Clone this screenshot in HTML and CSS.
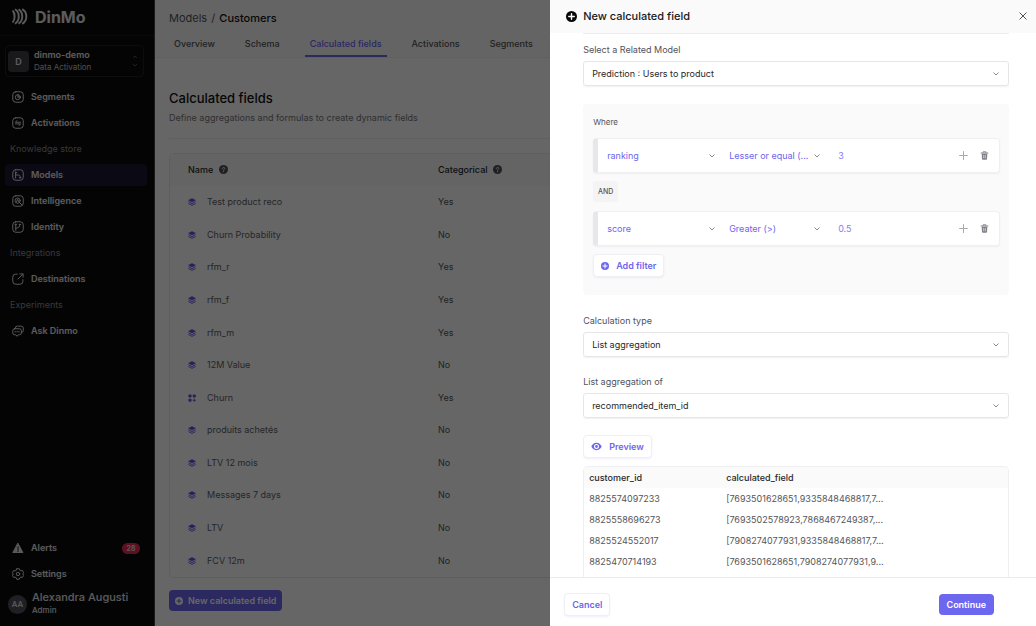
FILE: index.html
```html
<!DOCTYPE html>
<html lang="en">
<head>
    <meta charset="UTF-8">
    <meta name="viewport" content="width=device-width, initial-scale=1.0">
    <title>DinMo - Calculated fields</title>
    <link rel="stylesheet" href="styles.css">
</head>
<body>
<!-- shared icons -->
<svg class="sprite" aria-hidden="true">
    <symbol id="i-layers" viewBox="0 0 16 16">
        <path d="M8 1 15 4.500 8 8 1 4.500z" fill="currentColor" stroke="currentColor" stroke-linejoin="round"/>
        <path d="M1.500 8 8 11.200 14.500 8M1.500 11.500 8 14.700l6.500-3.200" fill="none" stroke="currentColor" stroke-width="1.700" stroke-linecap="round" stroke-linejoin="round"/>
    </symbol>
    <symbol id="i-grid" viewBox="0 0 16 16">
        <rect x="1" y="1" width="6" height="6" rx="1.500" fill="currentColor"/>
        <rect x="9.500" y="1" width="6" height="6" rx="1.500" fill="currentColor"/>
        <rect x="1" y="9.500" width="6" height="6" rx="1.500" fill="currentColor"/>
        <path d="M12.500 9.500v6M9.500 12.500h6" stroke="currentColor" stroke-width="1.800"/>
    </symbol>
    <symbol id="i-help" viewBox="0 0 16 16">
        <circle cx="8" cy="8" r="8" fill="currentColor"/>
        <path d="M5.800 6.200C5.900 3.300 10.300 3.400 10.200 6.200 10.100 7.700 8 7.700 8 9.600" fill="none" stroke="#fafafa" stroke-width="1.600" stroke-linecap="round"/>
        <circle cx="8" cy="12" r="1.100" fill="#fafafa"/>
    </symbol>
    <symbol id="i-plus-circle" viewBox="0 0 16 16">
        <circle cx="8" cy="8" r="8" fill="currentColor"/>
        <path class="cut" d="M8 4v8M4 8h8" stroke-width="2" stroke-linecap="round"/>
    </symbol>
    <symbol id="i-plus" viewBox="0 0 16 16">
        <path d="M8 1v14M1 8h14" stroke="currentColor" stroke-width="1.800" stroke-linecap="round"/>
    </symbol>
    <symbol id="i-trash" viewBox="0 0 16 16">
        <path d="M2 3.500h12" stroke="currentColor" stroke-width="2" stroke-linecap="round"/>
        <path d="M5.500 3V1.300h5V3" fill="none" stroke="currentColor" stroke-width="1.500"/>
        <path d="M3 5h10l-.6 9.200c-.1.800-.6 1.300-1.400 1.300H5c-.8 0-1.300-.5-1.400-1.300z" fill="currentColor"/>
        <path d="M6.500 7v6M9.500 7v6" stroke="#fff" stroke-width="1"/>
    </symbol>
</svg>

<div class="app">
    <aside class="sidebar">
        <div class="brand">
            <svg class="brand-mark" viewBox="0 0 16 17" fill="none" stroke="currentColor" stroke-width="1.900">
                <path d="M.5 2.500C3.300 5 3.300 12 .5 14.500"/>
                <path d="M3 1.300c5 3 5 11.400 0 14.400"/>
                <path d="M6.500 1.200c5 3.200 5 11.400 0 14.600"/>
                <path d="M10.200 1.200c5.500 3 5.500 11.600 0 14.600"/>
            </svg>
            <span>DinMo</span>
        </div>

        <button class="workspace" type="button">
            <span class="workspace-logo">D</span>
            <span class="workspace-text">
                <strong>dinmo-demo</strong>
                <small>Data Activation</small>
            </span>
            <svg class="workspace-arrows" viewBox="0 0 6 14" fill="none" stroke="currentColor"><path d="M1 4l2-2 2 2M1 10l2 2 2-2"/></svg>
        </button>

        <nav class="nav">
            <a href="#" class="nav-item">
                <svg class="nav-icon" viewBox="0 0 16 16"><rect x="1" y="1" width="14" height="14" rx="4"/><circle cx="7.700" cy="8.300" r="3.300"/><path d="M8 8V4.700M8 8h3.500"/></svg>
                Segments
            </a>
            <a href="#" class="nav-item">
                <svg class="nav-icon" viewBox="0 0 16 16"><rect x="1" y="1" width="14" height="14" rx="4"/><path d="M11.500 7h-7l2-2.200M4.500 9.200h7l-2 2.200"/></svg>
                Activations
            </a>
            <span class="nav-label">Knowledge store</span>
            <a href="#" class="nav-item active">
                <svg class="nav-icon" viewBox="0 0 16 16"><rect x="1" y="1" width="14" height="14" rx="4"/><path d="M4.800 4v8M4.800 8h3.500c1.800 0 2.700 1 2.700 3v1"/><path d="M4.500 4.800h2M10 11.500h2"/></svg>
                Models
            </a>
            <a href="#" class="nav-item">
                <svg class="nav-icon" viewBox="0 0 16 16"><rect x="1" y="1" width="14" height="14" rx="4"/><circle cx="7.500" cy="7.500" r="3.500"/><path d="M10 10l3 3M6 9l1.500-3.500L9 9"/></svg>
                Intelligence
            </a>
            <a href="#" class="nav-item">
                <svg class="nav-icon" viewBox="0 0 16 16"><rect x="1" y="1" width="14" height="14" rx="4"/><path d="M5 4v8.500M5 9.500c4 0 5.500-1.500 5.500-4.500M4 4.500h2.200M9.500 4.500h2.200"/></svg>
                Identity
            </a>
            <span class="nav-label">Integrations</span>
            <a href="#" class="nav-item">
                <svg class="nav-icon" viewBox="0 0 16 16"><path d="M7 1.500H5a4 4 0 0 0-4 4V11a4 4 0 0 0 4 4h5.500a4 4 0 0 0 4-4V9M8 8l6.500-6.500M10.500 1.200h4.300v4.300"/></svg>
                Destinations
            </a>
            <span class="nav-label">Experiments</span>
            <a href="#" class="nav-item">
                <svg class="nav-icon" viewBox="0 0 16 16"><path d="M4.500 4.500V4a2.500 2.500 0 0 1 2.500-2.500h5.500A2.500 2.500 0 0 1 15 4v3.500a2.500 2.500 0 0 1-2.500 2.500"/><path d="M3.500 5H10a2.500 2.500 0 0 1 2.500 2.500v3A2.500 2.500 0 0 1 10 13H8.500L6.700 15 5 13H3.500A2.500 2.500 0 0 1 1 10.500v-3A2.500 2.500 0 0 1 3.500 5z"/><path d="M4 9h.8M6.400 9h.8M8.800 9h.8"/></svg>
                Ask Dinmo
            </a>
        </nav>

        <div class="nav nav-bottom">
            <a href="#" class="nav-item">
                <svg class="nav-icon" viewBox="0 0 16 16"><path d="M8 2 14.500 14h-13z" fill="currentColor"/><path d="M8 6.500v3.500M8 11.500v1.200" class="dark"/></svg>
                Alerts
                <span class="badge">28</span>
            </a>
            <a href="#" class="nav-item">
                <svg class="nav-icon" viewBox="0 0 16 16"><path d="M6.300 1h3.400l.7 2 1.400.8 2.100-.4 1.700 2.900L14.200 8l1.400 1.700-1.700 2.900-2.100-.4-1.400.8-.7 2H6.300l-.7-2-1.400-.8-2.100.4L.4 9.700 1.800 8 .4 6.300l1.700-2.900 2.100.4L5.600 3z"/><circle cx="8" cy="8" r="2.300"/></svg>
                Settings
            </a>
            <div class="user">
                <span class="avatar">AA</span>
                <span class="user-text">
                    <strong>Alexandra Augusti</strong>
                    <small>Admin</small>
                </span>
            </div>
        </div>
    </aside>

    <main class="main">
        <header class="page-header">
            <div class="breadcrumb"><a href="#">Models</a> <span>/</span> <b>Customers</b></div>
            <nav class="tabs">
                <a href="#">Overview</a>
                <a href="#">Schema</a>
                <a href="#" class="active">Calculated fields</a>
                <a href="#">Activations</a>
                <a href="#">Segments</a>
            </nav>
        </header>

        <section class="content">
            <h1>Calculated fields</h1>
            <p class="intro">Define aggregations and formulas to create dynamic fields</p>
            <div class="table-card">
                <table class="fields">
                    <thead>
                    <tr>
                        <th>Name <svg class="help"><use href="#i-help"/></svg></th>
                        <th>Categorical <svg class="help"><use href="#i-help"/></svg></th>
                    </tr>
                    </thead>
                    <tbody>
                    <tr><td><svg class="type"><use href="#i-layers"/></svg>Test product reco</td><td>Yes</td></tr>
                    <tr><td><svg class="type"><use href="#i-layers"/></svg>Churn Probability</td><td>No</td></tr>
                    <tr><td><svg class="type"><use href="#i-layers"/></svg>rfm_r</td><td>Yes</td></tr>
                    <tr><td><svg class="type"><use href="#i-layers"/></svg>rfm_f</td><td>Yes</td></tr>
                    <tr><td><svg class="type"><use href="#i-layers"/></svg>rfm_m</td><td>Yes</td></tr>
                    <tr><td><svg class="type"><use href="#i-layers"/></svg>12M Value</td><td>No</td></tr>
                    <tr><td><svg class="type"><use href="#i-grid"/></svg>Churn</td><td>Yes</td></tr>
                    <tr><td><svg class="type"><use href="#i-layers"/></svg>produits achetés</td><td>No</td></tr>
                    <tr><td><svg class="type"><use href="#i-layers"/></svg>LTV 12 mois</td><td>No</td></tr>
                    <tr><td><svg class="type"><use href="#i-layers"/></svg>Messages 7 days</td><td>No</td></tr>
                    <tr><td><svg class="type"><use href="#i-layers"/></svg>LTV</td><td>No</td></tr>
                    <tr><td><svg class="type"><use href="#i-layers"/></svg>FCV 12m</td><td>No</td></tr>
                    </tbody>
                </table>
            </div>
            <button class="btn btn-primary btn-new" type="button"><svg class="btn-icon"><use href="#i-plus-circle"/></svg>New calculated field</button>
        </section>
    </main>
</div>

<div class="overlay"></div>

<div class="drawer" role="dialog" aria-labelledby="drawerTitle">
    <header class="drawer-header">
        <svg class="drawer-icon"><use href="#i-plus-circle"/></svg>
        <h2 id="drawerTitle">New calculated field</h2>
        <button class="close" type="button" aria-label="Close">
            <svg viewBox="0 0 10 10" fill="none" stroke="currentColor"><path d="M1.500 1.500l7 7M8.500 1.500l-7 7"/></svg>
        </button>
    </header>

    <form class="drawer-body">
        <div class="form-group">
            <label for="relatedModel">Select a Related Model</label>
            <select id="relatedModel"><option>Prediction : Users to product</option></select>
        </div>

        <div class="filters">
            <p class="where">Where</p>
            <div class="filter">
                <select class="filter-field" aria-label="Field"><option>ranking</option></select>
                <select class="filter-operator" aria-label="Operator"><option>Lesser or equal (...</option></select>
                <input class="filter-value" type="text" aria-label="Value" value="3">
                <button class="icon-btn plus" type="button" aria-label="Add condition"><svg><use href="#i-plus"/></svg></button>
                <button class="icon-btn" type="button" aria-label="Delete filter"><svg><use href="#i-trash"/></svg></button>
            </div>
            <span class="and">AND</span>
            <div class="filter">
                <select class="filter-field" aria-label="Field"><option>score</option></select>
                <select class="filter-operator" aria-label="Operator"><option>Greater (&gt;)</option></select>
                <input class="filter-value" type="text" aria-label="Value" value="0.5">
                <button class="icon-btn plus" type="button" aria-label="Add condition"><svg><use href="#i-plus"/></svg></button>
                <button class="icon-btn" type="button" aria-label="Delete filter"><svg><use href="#i-trash"/></svg></button>
            </div>
            <button class="btn btn-light" type="button"><svg class="btn-icon"><use href="#i-plus-circle"/></svg>Add filter</button>
        </div>

        <div class="form-group">
            <label for="calcType">Calculation type</label>
            <select id="calcType"><option>List aggregation</option></select>
        </div>
        <div class="form-group">
            <label for="aggregationOf">List aggregation of</label>
            <select id="aggregationOf"><option>recommended_item_id</option></select>
        </div>

        <button class="btn btn-light" type="button">
            <svg class="btn-icon eye" viewBox="0 0 18 14"><path d="M9 1C4.500 1 1.800 4.300.5 7 1.800 9.700 4.500 13 9 13s7.200-3.300 8.500-6C16.200 4.300 13.500 1 9 1z" fill="currentColor"/><circle cx="9" cy="7" r="3.200" fill="currentColor" stroke="#fff" stroke-width="1.800"/></svg>Preview
        </button>

        <div class="preview-card">
            <table class="preview">
                <thead>
                <tr><th>customer_id</th><th>calculated_field</th></tr>
                </thead>
                <tbody>
                <tr><td>8825574097233</td><td>[7693501628651,9335848468817,7...</td></tr>
                <tr><td>8825558696273</td><td>[7693502578923,7868467249387,...</td></tr>
                <tr><td>8825524552017</td><td>[7908274077931,9335848468817,7...</td></tr>
                <tr><td>8825470714193</td><td>[7693501628651,7908274077931,9...</td></tr>
                </tbody>
            </table>
        </div>
    </form>

    <footer class="drawer-footer">
        <button class="btn btn-light" type="button">Cancel</button>
        <button class="btn btn-primary" type="button">Continue</button>
    </footer>
</div>
</body>
</html>
```
FILE: styles.css
```css
* { box-sizing: border-box; }
body {
    margin: 0;
    font-family: Inter, sans-serif;
    font-size: 9px;
    line-height: 14px;
    color: #555559;
}
a { color: inherit; text-decoration: none; }
button, input, select { font: inherit; color: inherit; }
button { cursor: pointer; }
.sprite { position: absolute; width: 0; height: 0; }

.app { display: flex; height: 100vh; overflow: hidden; }

/* sidebar */
.sidebar {
    flex: 0 0 155px;
    display: flex;
    flex-direction: column;
    background: #0c0c0c;
    border-right: 1px solid #444;
    color: #e4e4e7;
}
.brand {
    display: flex;
    align-items: center;
    gap: 7px;
    height: 36px;
    padding: 0 12px 2px;
    border-bottom: 1px solid #1c1c1e;
    font-size: 16px;
    line-height: 20px;
    font-weight: 700;
}
.brand-mark { width: 16px; height: 17px; }
.workspace {
    display: flex;
    align-items: center;
    gap: 5px;
    height: 32px;
    margin: 9px 10px 9px 5px;
    padding: 0 5px 0 2px;
    border: 1px solid #222225;
    border-radius: 4px;
    background: none;
    text-align: left;
}
.workspace-logo {
    width: 21px;
    height: 21px;
    border-radius: 4px;
    background: #3f3f46;
    font-weight: 600;
    line-height: 21px;
    text-align: center;
}
.workspace-text, .user-text { display: flex; flex-direction: column; flex: 1; }
.workspace-text strong { font-weight: 600; line-height: 13px; }
.workspace-text small { font-size: 8px; line-height: 13px; color: #c4c4c8; }
.workspace-arrows { width: 6px; height: 14px; color: #52525b; }

.nav { display: flex; flex-direction: column; gap: 4px; padding: 0 7px 0 5px; }
.nav-item, .nav-label { height: 22px; line-height: 22px; }
.nav-item {
    display: flex;
    align-items: center;
    gap: 7px;
    padding: 0 7px;
    border-radius: 4px;
    font-weight: 600;
}
.nav-item.active { background: #1c1a34; }
.nav-label { padding-left: 5px; color: #8b8b91; }
.nav-icon {
    width: 12px;
    height: 12px;
    fill: none;
    stroke: currentColor;
    stroke-width: 1.300;
    stroke-linecap: round;
    stroke-linejoin: round;
}
.nav-icon .dark { stroke: #0c0c0c; }
.badge {
    margin-left: auto;
    width: 18px;
    border-radius: 6px;
    background: #e92a55;
    font-size: 7px;
    line-height: 11px;
    text-align: center;
}
.nav-bottom { margin-top: auto; padding-bottom: 9px; }
.user { display: flex; align-items: center; gap: 5px; margin-top: 2px; padding-left: 3px; }
.avatar {
    width: 19px;
    height: 19px;
    border-radius: 50%;
    background: #52525b;
    font-size: 8px;
    font-weight: 500;
    line-height: 19px;
    text-align: center;
}
.user-text strong { font-size: 11px; font-weight: 500; line-height: 13px; }
.user-text small { font-size: 8px; font-weight: 500; line-height: 13px; }

/* page */
.main { flex: 1; display: flex; flex-direction: column; min-width: 0; }
.page-header { padding: 10px 14px 0; border-bottom: 1px solid #f1f1f2; background: #fafafa; }
.breadcrumb { font-size: 11px; line-height: 16px; }
.breadcrumb span { padding: 0 1px; }
.breadcrumb b { font-weight: 500; color: #111; }
.tabs { display: flex; gap: 20px; margin-top: 7px; font-weight: 500; }
.tabs a { padding: 4px 5px; border-bottom: 2px solid transparent; }
.tabs .active { color: #6d66ee; border-bottom-color: #6d66ee; }

.content {
    flex: 1;
    display: flex;
    flex-direction: column;
    align-items: stretch;
    min-height: 0;
    padding: 31px 14px 15px;
}
h1 { margin: 0; font-size: 13px; font-weight: 500; line-height: 18px; color: #111; }
.intro { margin: 4px 0 0; padding-bottom: 13px; border-bottom: 1px solid #f1f1f2; color: #77777c; }
.table-card { flex: 1; min-height: 0; margin: 14px 0 12px; border: 1px solid #ececee; border-radius: 5px; overflow: hidden; }
.fields { width: 100%; height: 100%; border-collapse: collapse; }
.fields th, .fields td { padding: 0 0 0 18px; text-align: left; }
.fields th { height: 32px; background: #fafafa; font-weight: 500; color: #27272a; }
.fields th:first-child { width: 250px; }
.fields td:first-child { color: #606066; }
.help { width: 9px; height: 9px; margin-left: 3px; vertical-align: -1px; color: #52525b; }
.type { width: 8px; height: 8px; margin-right: 11px; vertical-align: -1px; color: #5b50e8; }

.btn {
    display: inline-flex;
    align-items: center;
    align-self: flex-start;
    gap: 7px;
    height: 23px;
    padding: 0 7px;
    border: 1px solid transparent;
    border-radius: 4px;
    font-weight: 600;
}
.btn-icon { width: 8px; height: 8px; --cut: #fff; }
.btn-icon.eye { width: 11px; height: 9px; }
.cut { stroke: var(--cut, #fff); }
.btn-primary { height: 21px; background: #6d66ee; color: #fff; }
.btn-new { gap: 5px; padding: 0 5px; }
.btn-new .btn-icon { --cut: #6d66ee; }
.btn-light { background: #fff; border-color: #f0f0f4; box-shadow: 0 1px 2px rgba(80, 70, 200, 0.08); color: #6d66ee; }

.overlay { position: fixed; inset: 0; background: rgba(0, 0, 0, 0.6); }

/* drawer */
.drawer {
    position: fixed;
    top: 0;
    right: 0;
    bottom: 0;
    width: 46.9%;
    display: flex;
    flex-direction: column;
    background: #fff;
}
.drawer-header {
    display: flex;
    align-items: center;
    gap: 6px;
    height: 33px;
    padding: 0 8px 1px 16px;
    background: #fafafa;
}
.drawer-icon { width: 11px; height: 11px; color: #09090b; }
h2 { flex: 1; margin: 0; font-size: 11px; font-weight: 500; color: #18181b; }
.close { display: flex; padding: 0; border: 0; background: none; }
.close svg { width: 10px; height: 10px; }
.drawer-body {
    flex: 1;
    display: flex;
    flex-direction: column;
    align-items: stretch;
    min-height: 0;
    margin: 0 27px 0 33px;
    overflow: hidden;
    border-top: 1px solid #ececee;
}
.form-group { margin: 9px 0; }
.form-group label { display: block; margin-bottom: 4px; color: #52525b; }
select {
    appearance: none;
    border: 0;
    background: url("data:image/svg+xml,%3Csvg xmlns='http://www.w3.org/2000/svg' width='6' height='4' fill='none' stroke='%238a8a90'%3E%3Cpath d='M.5.5 3 3 5.500.5'/%3E%3C/svg%3E") no-repeat right 9px center;
}
.form-group select {
    width: 100%;
    height: 25px;
    padding: 0 20px 0 8px;
    border: 1px solid #e6e6e9;
    border-radius: 3px;
    box-shadow: 0 1px 2px rgba(0, 0, 0, 0.06);
    color: #27272a;
}
.filters { margin: 9px 0 10px; padding: 11px 9px 18px 10px; border-radius: 4px; background: #fafafa; }
.where { margin: 0 0 9px; font-size: 8px; color: #52525b; }
.filter {
    display: flex;
    align-items: center;
    height: 35px;
    padding: 0 8px 0 9px;
    border: 1px solid #f0f0f2;
    border-left: 5px solid #e5e7eb;
    border-radius: 4px;
    background: #fff;
    box-shadow: 0 1px 2px rgba(0, 0, 0, 0.05);
    color: #6d66ee;
}
.filter select { padding: 0; background-position: right 1px center; }
.filter-field { width: 109px; margin-right: 13px; }
.filter-operator { width: 92px; margin-right: 17px; }
.filter-value { flex: 1; min-width: 0; padding: 0; border: 0; background: none; color: #8780f2; }
.icon-btn { display: flex; padding: 2px; border: 0; background: none; color: #7f7f86; }
.icon-btn svg { width: 9px; height: 9px; }
.icon-btn.plus { margin-right: 8px; color: #a9a9b2; }
.and {
    display: block;
    width: 25px;
    margin: 8px 0 9px;
    border-radius: 3px;
    background: #f4f4f5;
    font-size: 7px;
    font-weight: 500;
    line-height: 21px;
    text-align: center;
}
.filters .btn { margin-top: 8px; }
.form-group + .btn { margin-top: 8px; }
.preview-card { flex: 1 0 auto; margin-top: 8px; border: 1px solid #f0f0f2; border-bottom: 0; border-radius: 5px 5px 0 0; overflow: hidden; }
.preview { width: 100%; border-collapse: collapse; }
.preview th, .preview td { height: 21px; padding: 0 5px; text-align: left; }
.preview th { background: #fafafa; font-weight: 500; color: #27272a; }
.preview th:first-child { width: 137px; }
.drawer-footer {
    display: flex;
    align-items: center;
    justify-content: space-between;
    padding: 15px 42px 10px 14px;
    border-top: 1px solid #ececee;
}
.drawer-footer .btn { align-self: center; }
```
